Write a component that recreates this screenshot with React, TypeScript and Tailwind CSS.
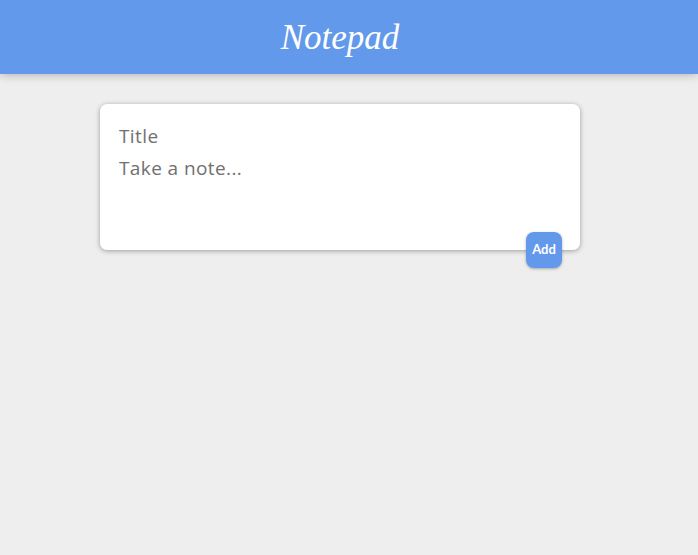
export default function App() {
  return (
    <div className="min-h-[555px] bg-[#eeeeee] font-['Open_Sans',sans-serif]">
      <header className="flex h-[74px] items-center justify-center bg-[#6399ea] pr-[18px] shadow-[0_0_10px_rgba(0,0,0,0.3)]">
        <h1 className="font-['Liberation_Serif',serif] text-[35px] italic leading-none text-white">Notepad</h1>
      </header>
      <div className="flex justify-center pr-[18px] pt-[30px]">
        <form className="relative h-[146px] w-[480px] rounded-[7px] bg-white px-[19px] pt-[20px] shadow-[0_1px_5px_rgb(0_0_0/0.35)]">
          <input
            placeholder="Title"
            className="block w-full bg-transparent text-[19px] leading-[24px] tracking-[0.4px] text-[#444] outline-none placeholder:text-[#707070]"
          />
          <textarea
            placeholder="Take a note..."
            rows={3}
            className="mt-[8px] block w-full resize-none bg-transparent text-[19px] leading-[24px] tracking-[0.4px] text-[#444] outline-none placeholder:text-[#707070]"
          />
          <button
            type="button"
            className="absolute -bottom-[18px] right-[18px] flex h-[36px] w-[36px] items-center justify-center rounded-[8px] bg-[#6399ea] font-['Lato',sans-serif] text-[13px] font-bold text-white shadow-[0_1px_3px_rgba(0,0,0,0.3)]"
          >
            Add
          </button>
        </form>
      </div>
    </div>
  );
}
